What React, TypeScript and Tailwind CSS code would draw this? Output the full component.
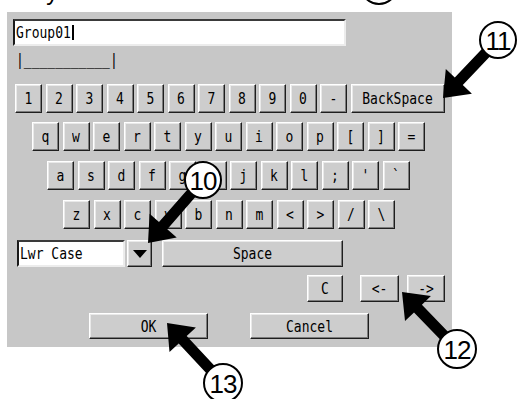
import React from 'react';

const MONO = "font-['DejaVu_Sans_Mono',monospace]";

const raised =
  'bg-[#cdcdcd] border border-t-white border-l-white border-r-[#1e1e1e] border-b-[#1e1e1e] shadow-[inset_-1px_-1px_0_#7c7c7c,inset_1px_1px_0_#e9e9e9]';
const sunken =
  'bg-white border-2 border-t-[#3a3a3a] border-l-[#1a1a1a] border-r-[#ececec] border-b-[#ececec]';

const Label: React.FC<{ text: string }> = ({ text }) => (
  <span className={`inline-block scale-y-125 text-[13px] leading-none text-black ${MONO}`}>{text}</span>
);

const Key: React.FC<{ label: string; w?: string; h?: string }> = ({ label, w = 'w-[27px]', h = 'h-[29px]' }) => (
  <div className={`${raised} ${w} ${h} flex items-center justify-center shrink-0`}>
    <Label text={label} />
  </div>
);

const rows: string[][] = [
  ['1', '2', '3', '4', '5', '6', '7', '8', '9', '0', '-'],
  ['q', 'w', 'e', 'r', 't', 'y', 'u', 'i', 'o', 'p', '[', ']', '='],
  ['a', 's', 'd', 'f', 'g', 'h', 'j', 'k', 'l', ';', "'", '`'],
  ['z', 'x', 'c', 'v', 'b', 'n', 'm', '<', '>', '/', '\\'],
];

type Pt = [number, number];

function arrow(s: Pt, t: Pt, head = 23, hw = 18, sw = 5.5): string {
  const dx = t[0] - s[0];
  const dy = t[1] - s[1];
  const len = Math.hypot(dx, dy);
  const ux = dx / len;
  const uy = dy / len;
  const nx = -uy;
  const ny = ux;
  const bx = t[0] - head * ux;
  const by = t[1] - head * uy;
  const pts: Pt[] = [
    [s[0] + sw * nx, s[1] + sw * ny],
    [bx + sw * nx, by + sw * ny],
    [bx + hw * nx, by + hw * ny],
    t,
    [bx - hw * nx, by - hw * ny],
    [bx - sw * nx, by - sw * ny],
    [s[0] - sw * nx, s[1] - sw * ny],
  ];
  return pts.map((p) => `${p[0].toFixed(1)},${p[1].toFixed(1)}`).join(' ');
}

const callouts: { c: Pt; r: number; n: string; tip?: Pt }[] = [
  { c: [379, -14], r: 18, n: '9' },
  { c: [498, 40], r: 18, n: '11', tip: [443, 98] },
  { c: [203, 180], r: 18, n: '10', tip: [148, 243] },
  { c: [457, 349], r: 19, n: '12', tip: [402, 292] },
  { c: [223, 383], r: 19, n: '13', tip: [167, 323] },
];

export default function App() {
  return (
    <div className="relative w-[519px] h-[399px] bg-white overflow-hidden font-['Liberation_Sans',sans-serif]">
      <div className="h-[12px] overflow-hidden">
        <div className="-mt-[20px] ml-[17px] text-[24px] leading-[24px] text-black">Keyboard</div>
      </div>

      <div className="ml-[7px] w-[445px] h-[335px] bg-[#c7c7c7] flex flex-col pl-[6px] pr-[7px] pt-[7px]">
        <div className={`${sunken} w-[333px] h-[27px] flex items-center pl-[1px]`}>
          <Label text="Group01" />
          <div className="w-[2px] h-[15px] bg-black ml-[1px]" />
        </div>

        <div className="mt-[1px] h-[24px] pl-[3px] flex items-center">
          <Label text="|___________|" />
        </div>

        <div className="mt-[13px] ml-[2px] flex gap-[3.5px]">
          {rows[0].map((k) => (
            <Key key={k} label={k} />
          ))}
          <Key label="BackSpace" w="w-[94px]" />
        </div>
        <div className="mt-[9px] ml-[19px] flex gap-[3.5px]">
          {rows[1].map((k) => (
            <Key key={k} label={k} />
          ))}
        </div>
        <div className="mt-[10px] ml-[34px] flex gap-[3.5px]">
          {rows[2].map((k) => (
            <Key key={k} label={k} />
          ))}
        </div>
        <div className="mt-[10px] ml-[50px] flex gap-[3.5px]">
          {rows[3].map((k) => (
            <Key key={k} label={k} />
          ))}
        </div>

        <div className="mt-[11px] ml-[4px] flex">
          <div className={`${sunken} w-[108px] h-[27px] flex items-center pl-[1px]`}>
            <Label text="Lwr Case" />
          </div>
          <div className={`${raised} ml-[2px] w-[25px] h-[27px] flex items-center justify-center`}>
            <svg width="14" height="8" viewBox="0 0 14 8">
              <polygon points="0,0 14,0 7,8" fill="#000" />
            </svg>
          </div>
          <div className="ml-[10px]">
            <Key label="Space" w="w-[181px]" h="h-[27px]" />
          </div>
        </div>

        <div className="mt-[8px] flex justify-end">
          <div className="mr-[17px]">
            <Key label="C" w="w-[36px]" h="h-[27px]" />
          </div>
          <div className="mr-[8px]">
            <Key label="<-" w="w-[39px]" h="h-[27px]" />
          </div>
          <Key label="->" w="w-[38px]" h="h-[27px]" />
        </div>

        <div className="mt-[11px] ml-[76px] flex gap-[42px]">
          <Key label="OK" w="w-[119px]" h="h-[26px]" />
          <Key label="Cancel" w="w-[119px]" h="h-[26px]" />
        </div>
      </div>

      <svg className="absolute inset-0 pointer-events-none" width="519" height="399" viewBox="0 0 519 399">
        {callouts
          .filter((c) => c.tip)
          .map((c) => (
            <polygon key={`a${c.n}`} points={arrow(c.c, c.tip as Pt)} fill="#000" />
          ))}
        {callouts.map((c) => (
          <g key={c.n}>
            <circle cx={c.c[0]} cy={c.c[1]} r={c.r} fill="#fff" stroke="#000" strokeWidth="2" />
            <text
              x={c.c[0]}
              y={c.c[1] + 9.5}
              textAnchor="middle"
              fontFamily="Liberation Sans, sans-serif"
              fontSize="26"
              letterSpacing="-1"
              fill="#000"
            >
              {c.n}
            </text>
          </g>
        ))}
      </svg>
    </div>
  );
}
